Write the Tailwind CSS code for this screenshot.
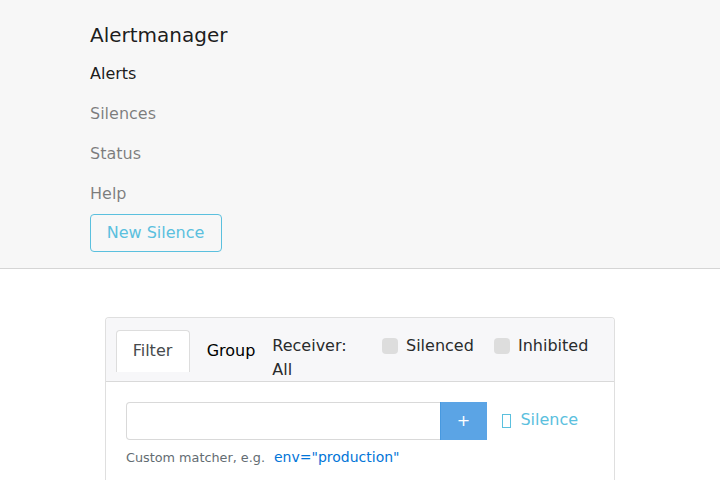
<!DOCTYPE html>
<html lang="en">
<head>
<meta charset="utf-8">
<title>Alertmanager</title>
<script src="https://cdn.jsdelivr.net/npm/@tailwindcss/browser@4"></script>
</head>
<body class="h-[480px] overflow-hidden bg-white font-['DejaVu_Sans',sans-serif] text-base leading-6 text-[#292b2c] antialiased">
<header class="h-[269px] border-b border-[#d5d5d5] bg-[#f7f7f7] px-[90px] pt-5">
  <a class="block text-xl leading-[30px] text-black/90">Alertmanager</a>
  <nav class="mt-1 flex flex-col text-black/50">
    <a class="py-2 text-black/90">Alerts</a>
    <a class="py-2">Silences</a>
    <a class="py-2">Status</a>
    <a class="py-2">Help</a>
  </nav>
  <button class="block h-[38px] w-[132px] rounded border border-[#5bc0de] pr-px text-[#5bc0de]">New Silence</button>
</header>
<main class="mx-[105px] mt-12 h-[163px] overflow-hidden rounded-t border border-b-0 border-[#dfdfdf]">
  <div class="flex h-16 items-start border-b border-[#d9d9d9] bg-[#f7f7f9] pl-[10px]">
    <a class="mt-3 h-[42px] w-[74px] rounded-t border border-b-0 border-[#ddd] bg-white pt-2 pr-px text-center text-[#464a4c]">Filter</a>
    <a class="mt-[21px] w-[82px] text-center text-black">Group</a>
    <span class="mt-4 w-[110px] pl-[0.3px] pr-4">Receiver: All</span>
    <label class="mt-4 flex w-28 gap-2"><i class="mt-1 size-4 rounded bg-[#ddd]"></i>Silenced</label>
    <label class="mt-4 flex gap-2"><i class="mt-1 size-4 rounded bg-[#ddd]"></i>Inhibited</label>
  </div>
  <div class="px-5 pt-5">
    <div class="flex h-[38px]">
      <input class="w-[314px] rounded-l border border-r-0 border-black/15 bg-white px-3">
      <button class="w-[47px] border-l border-[#4799e0] bg-[#5ba4e5] pr-px text-white">+</button>
      <a class="ml-[15px] flex items-center pb-0.5 text-[#5bc0de]"><span class="mt-0.5 mr-[9.4px] h-[14px] w-[9px] border border-current"></span>Silence</a>
    </div>
    <div class="mt-1 flex items-center text-[12.8px] text-[#636c72]"><span class="pt-0.5">Custom matcher, e.g.</span><a class="ml-[9px] text-sm text-[#0275d8]">env="production"</a></div>
  </div>
</main>
</body>
</html>
